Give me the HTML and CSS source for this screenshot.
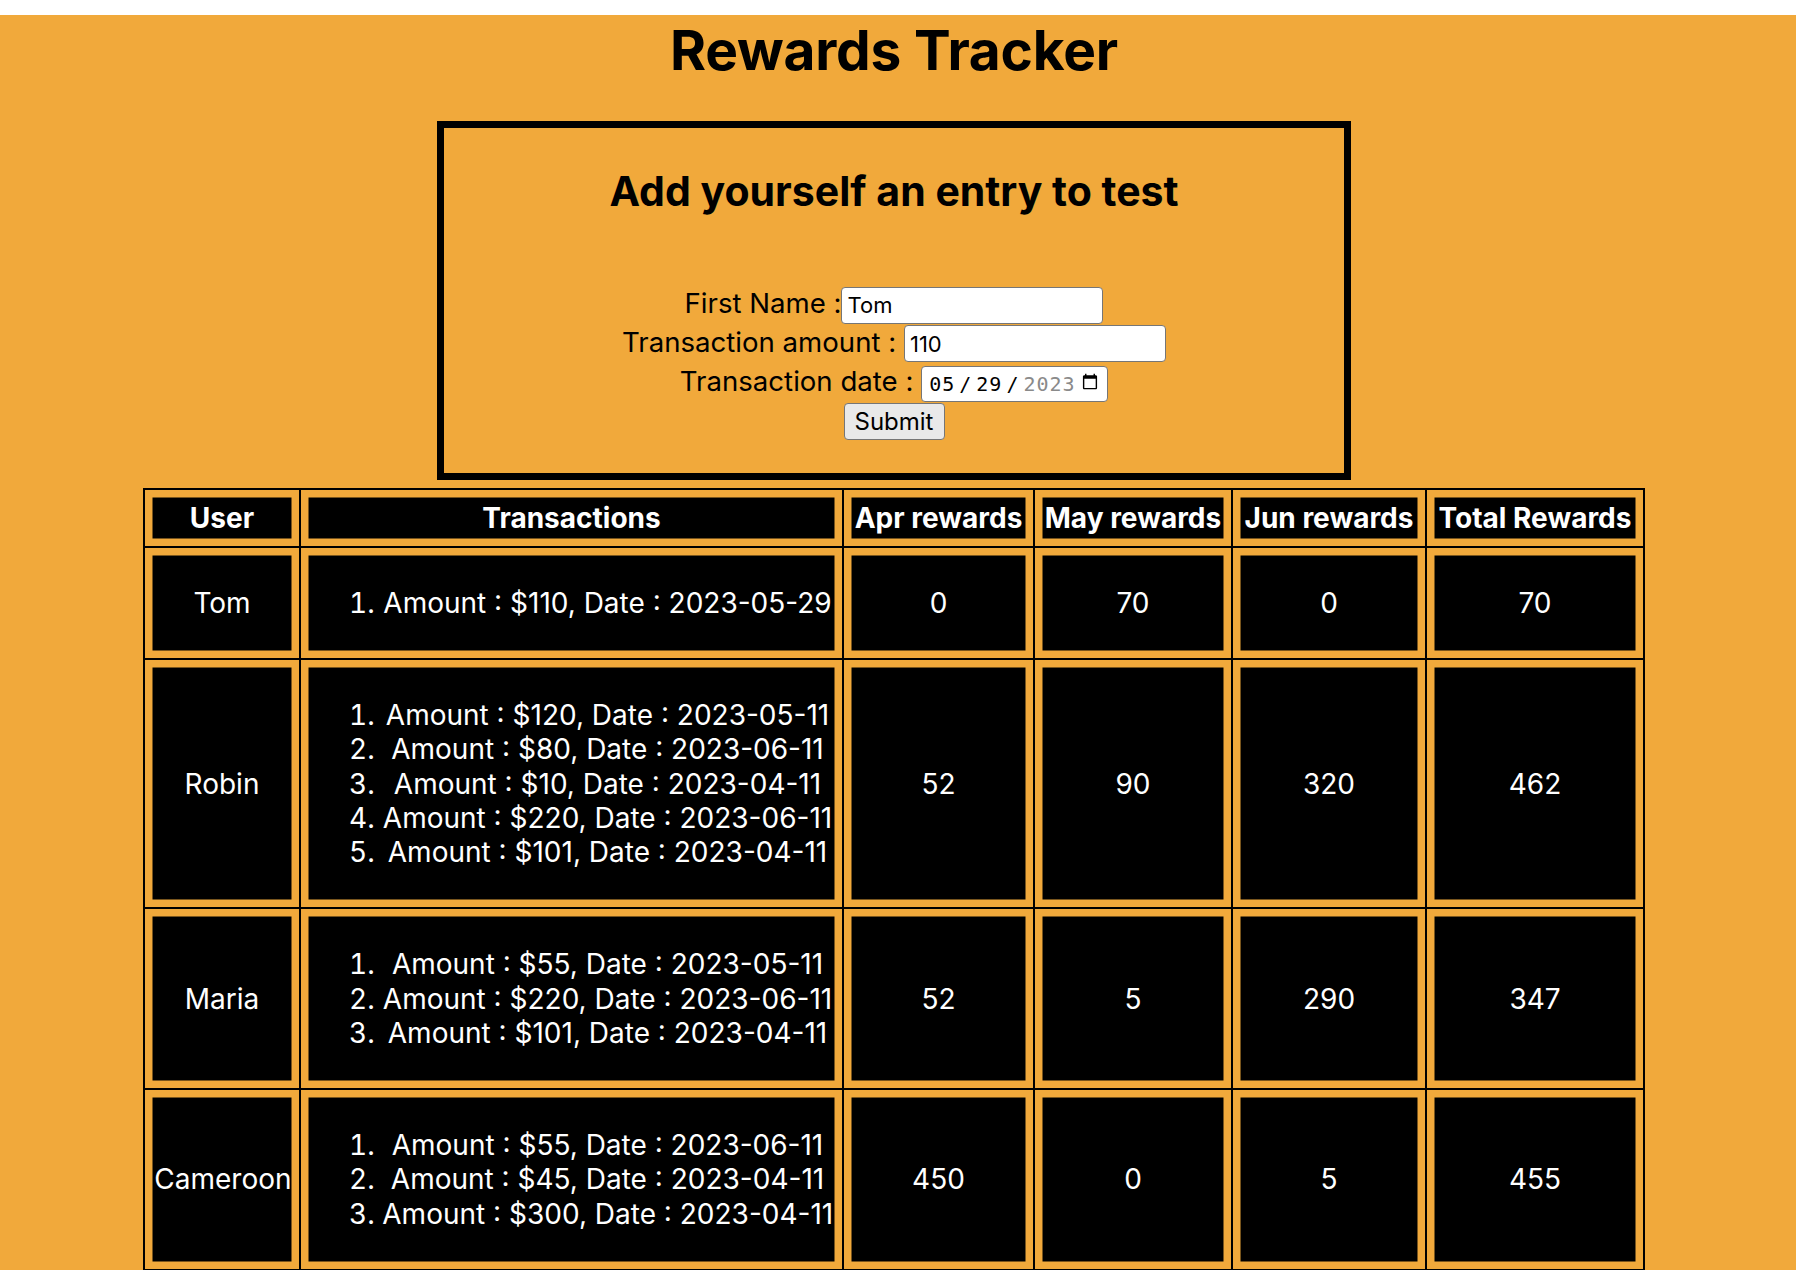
FILE: index.html
```html
<!DOCTYPE html>
<html lang="en">
<head>
<meta charset="utf-8">
<title>Rewards Tracker</title>
<link rel="stylesheet" href="styles.css">
</head>
<body>
<div class="app">
  <h1 class="title">Rewards Tracker</h1>
  <section class="entry-box">
    <h2 class="entry-title">Add yourself an entry to test</h2>
    <form class="entry-form">
      <div class="field"><label class="field-label" for="fname">First Name :</label><input class="text-input" id="fname" type="text" value="Tom"></div>
      <div class="field"><label class="field-label" for="amount">Transaction amount :&nbsp;</label><input class="text-input" id="amount" type="text" value="110"></div>
      <div class="field"><label class="field-label" for="tdate">Transaction date :&nbsp;</label><input class="date-input" id="tdate" type="date" value="2023-05-29"></div>
      <div class="field"><button class="submit-btn" type="button">Submit</button></div>
    </form>
  </section>
  <table class="rewards">
    <thead>
      <tr>
        <th class="col-user">User</th>
        <th class="col-tx">Transactions</th>
        <th class="col-apr">Apr rewards</th>
        <th class="col-may">May rewards</th>
        <th class="col-jun">Jun rewards</th>
        <th class="col-total">Total Rewards</th>
      </tr>
    </thead>
    <tbody>
      <tr>
        <td>Tom</td>
        <td><ol class="tx-list"><li>Amount : $110, Date : 2023-05-29</li></ol></td>
        <td>0</td><td>70</td><td>0</td><td>70</td>
      </tr>
      <tr>
        <td>Robin</td>
        <td><ol class="tx-list">
          <li>Amount : $120, Date : 2023-05-11</li>
          <li>Amount : $80, Date : 2023-06-11</li>
          <li>Amount : $10, Date : 2023-04-11</li>
          <li>Amount : $220, Date : 2023-06-11</li>
          <li>Amount : $101, Date : 2023-04-11</li>
        </ol></td>
        <td>52</td><td>90</td><td>320</td><td>462</td>
      </tr>
      <tr>
        <td>Maria</td>
        <td><ol class="tx-list">
          <li>Amount : $55, Date : 2023-05-11</li>
          <li>Amount : $220, Date : 2023-06-11</li>
          <li>Amount : $101, Date : 2023-04-11</li>
        </ol></td>
        <td>52</td><td>5</td><td>290</td><td>347</td>
      </tr>
      <tr>
        <td>Cameroon</td>
        <td><ol class="tx-list">
          <li>Amount : $55, Date : 2023-06-11</li>
          <li>Amount : $45, Date : 2023-04-11</li>
          <li>Amount : $300, Date : 2023-04-11</li>
        </ol></td>
        <td>450</td><td>0</td><td>5</td><td>455</td>
      </tr>
    </tbody>
  </table>
</div>
</body>
</html>
```

FILE: styles.css
```css
html, body {
  margin: 0;
  padding: 0;
  background: #ffffff;
}

body {
  padding-top: 15px;
  font-family: Inter, "Noto Sans", sans-serif;
  color: #000;
}

.app {
  background: #f1a93b;
  min-height: 1255px;
  padding: 0 8px 40px 0;
  box-sizing: border-box;
  text-align: center;
}

.title {
  margin: 0 0 35px;
  font-size: 55px;
  font-weight: 700;
  line-height: 71px;
  letter-spacing: -0.2px;
}

.entry-box {
  width: 900px;
  margin: 0 auto 8px;
  border: 7px solid #000;
  height: 345px;
  box-sizing: content-box;
}

.entry-title {
  margin: 39px 0 0;
  font-size: 41px;
  font-weight: 700;
  line-height: 48px;
}

.entry-form {
  margin-top: 71px;
  display: flex;
  flex-direction: column;
  gap: 1.3px;
}

.field {
  display: flex;
  justify-content: center;
  align-items: baseline;
}

.field-label {
  font-size: 27.6px;
  line-height: 34px;
  white-space: pre;
}

.text-input {
  width: 262px;
  height: 37px;
  box-sizing: border-box;
  margin: 0;
  padding: 0 5px;
  border: 1px solid #767676;
  border-radius: 4px;
  background: #fff;
  font-family: Inter, sans-serif;
  font-size: 22px;
  color: #000;
}

.date-input {
  width: 187px;
  height: 36px;
  box-sizing: border-box;
  margin: 0;
  padding: 0 8px 0 6px;
  border: 1px solid #767676;
  border-radius: 4px;
  background: #fff;
  font-family: "DejaVu Sans Mono", monospace;
  font-size: 20px;
  letter-spacing: 1px;
  color: #000;
}

.date-input::-webkit-datetime-edit {
  padding: 0;
}

.date-input::-webkit-datetime-edit-text {
  padding: 0 3px;
}

.date-input::-webkit-datetime-edit-year-field {
  color: #8a8a8a;
}

.date-input::-webkit-calendar-picker-indicator {
  width: 18px;
  height: 21px;
  padding: 0;
  margin: 0 0 0 1px;
}

.submit-btn {
  width: 101px;
  height: 37px;
  margin: 0;
  padding: 0;
  border: 1px solid #767676;
  border-radius: 4px;
  background: #e9e9e9;
  font-family: Inter, sans-serif;
  font-size: 24px;
  color: #000;
}

.rewards {
  margin: 0 auto;
  width: 1502px;
  table-layout: fixed;
  border-collapse: separate;
  border-spacing: 0;
  border-top: 2px solid #000;
  border-left: 2px solid #000;
  box-sizing: border-box;
  color: #fff;
}

.rewards th,
.rewards td {
  box-sizing: border-box;
  background: #000;
  border-right: 2px solid #000;
  border-bottom: 2px solid #000;
  box-shadow: inset 0 0 0 7.5px #f1a93b;
  padding: 9.3px;
  font-size: 28px;
  line-height: 34.2px;
  text-align: center;
  white-space: nowrap;
  vertical-align: middle;
}

.rewards th {
  font-weight: 700;
  padding-top: 11px;
  padding-bottom: 10.5px;
}

.rewards td {
  font-weight: 400;
}

.col-user { width: 156px; }
.col-tx { width: 543px; }
.col-apr { width: 191px; }
.col-may { width: 198px; }
.col-jun { width: 194px; }
.col-total { width: 218px; }

.tx-list {
  margin: 28.8px 0;
  padding: 0 0 0 72px;
  text-align: center;
}

.tx-list li {
  white-space: nowrap;
}
```
